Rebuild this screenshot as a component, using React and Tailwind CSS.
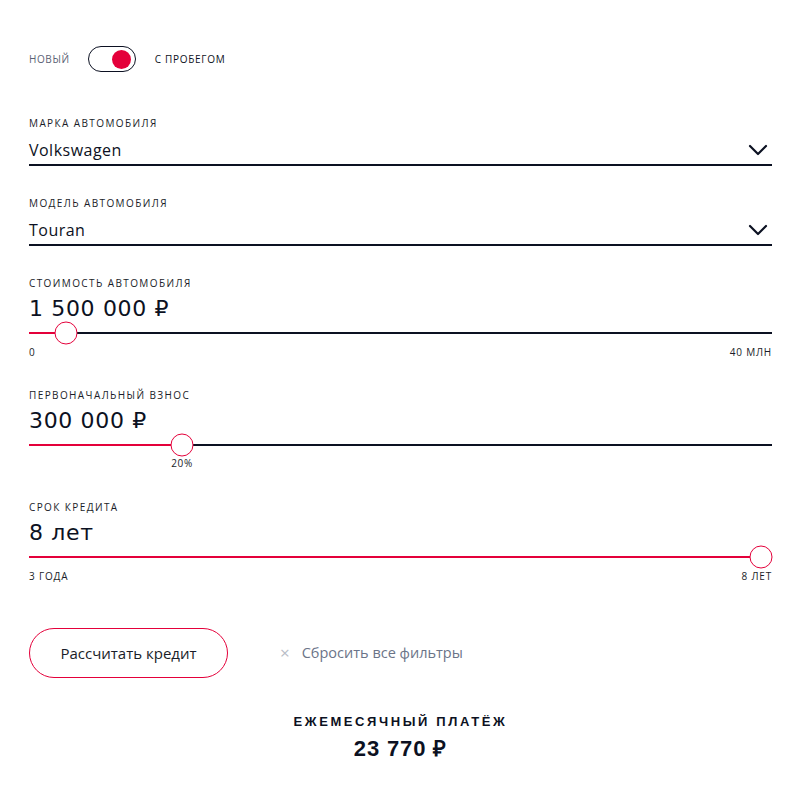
import React from 'react';

const RED = 'bg-[#e4003a]';

const Chevron = () => (
    <svg width="20" height="12" viewBox="0 0 20 12" fill="none" className="mr-[4px]">
        <path d="M2 2l8 8 8-8" stroke="#0c1122" strokeWidth="2.2" strokeLinecap="round" strokeLinejoin="round" />
    </svg>
);

const Label = ({ children }) => (
    <div className="text-[10px] leading-[12px] tracking-[0.14em] uppercase text-[#1a1d29]">{children}</div>
);

const Select = ({ label, value }) => (
    <div className="mt-[31px] first:mt-0">
        <Label>{label}</Label>
        <div className="mt-[10px] flex items-center justify-between border-b-2 border-[#0c1122] pb-[3px]">
            <span className="text-[16px] leading-[22px] tracking-[0.03em] text-[#0c1122]">{value}</span>
            <Chevron />
        </div>
    </div>
);

const Slider = ({ label, value, pct, left, right, under }) => (
    <div>
        <Label>{label}</Label>
        <div
            className="mt-[6px] text-[22px] leading-[28px] tracking-[0.03em] text-[#0c1122]"
            style={{ fontFamily: '"DejaVu Sans", sans-serif' }}
        >
            {value}
        </div>
        <div className="relative mt-[9px] h-[2px] bg-[#0c1122]">
            <div className={`absolute left-0 top-0 h-full ${RED}`} style={{ width: `${pct}%` }} />
            <div
                className="absolute top-1/2 w-[23px] h-[23px] -translate-x-1/2 -translate-y-1/2 rounded-full border border-[#e4003a] bg-white"
                style={{ left: `${pct}%` }}
            />
            {under && (
                <div
                    className="absolute top-[13px] -translate-x-1/2 text-[10px] leading-[12px] tracking-[0.06em] text-[#1a1d29]"
                    style={{ left: `${pct}%` }}
                >
                    {under}
                </div>
            )}
        </div>
        <div className="mt-[12px] flex justify-between text-[10px] leading-[12px] tracking-[0.08em] uppercase text-[#1a1d29] h-[12px]">
            <span>{left}</span>
            <span>{right}</span>
        </div>
    </div>
);

export default function App() {
    return (
        <div className="w-[805px] h-[791px] bg-white pl-[29px] pr-[33px] pt-[46px]" style={{ fontFamily: '"Open Sans", "DejaVu Sans", sans-serif' }}>
            {/* Toggle */}
            <div className="flex items-center h-[26px]">
                <span className="text-[10px] tracking-[0.06em] text-[#5b6275]">НОВЫЙ</span>
                <div className="ml-[18px] w-[48px] h-[26px] rounded-full border-[1.5px] border-[#0c1122] flex items-center justify-end pr-[4px]">
                    <div className={`w-[19px] h-[19px] rounded-full ${RED}`} />
                </div>
                <span className="ml-[19px] text-[10px] tracking-[0.07em] text-[#0c1122]">С ПРОБЕГОМ</span>
            </div>

            <div className="mt-[45px]">
                <Select label="Марка автомобиля" value="Volkswagen" />
                <Select label="Модель автомобиля" value="Touran" />
            </div>

            <div className="mt-[31px] flex flex-col gap-[31px]">
                <Slider label="Стоимость автомобиля" value="1 500 000 ₽" pct={5} left="0" right="40 млн" />
                <Slider label="Первоначальный взнос" value="300 000 ₽" pct={20.6} under="20%" />
                <Slider label="Срок кредита" value="8 лет" pct={98.5} left="3 года" right="8 лет" />
            </div>

            <div className="mt-[46px] flex items-center">
                <button className="w-[199px] h-[50px] rounded-full border border-[#e4003a] text-[15px] text-[#1a1d29]">
                    Рассчитать кредит
                </button>
                <div className="ml-[52px] flex items-center gap-[12px] text-[14.5px] text-[#6b7488]">
                    <span className="text-[#b8bcc6] text-[17px]">×</span>
                    <span>Сбросить все фильтры</span>
                </div>
            </div>

            <div className="mt-[34px] flex flex-col items-center" style={{ fontFamily: '"Liberation Sans", Arial, sans-serif' }}>
                <div className="text-[13px] font-bold tracking-[0.2em] text-[#0c1122]">
                    ЕЖЕМЕСЯЧНЫЙ ПЛАТЁЖ
                </div>
                <div className="mt-0 text-[22px] font-bold tracking-[0.04em] text-[#0c1122]">
                    23 770 ₽
                </div>
            </div>
        </div>
    );
}
